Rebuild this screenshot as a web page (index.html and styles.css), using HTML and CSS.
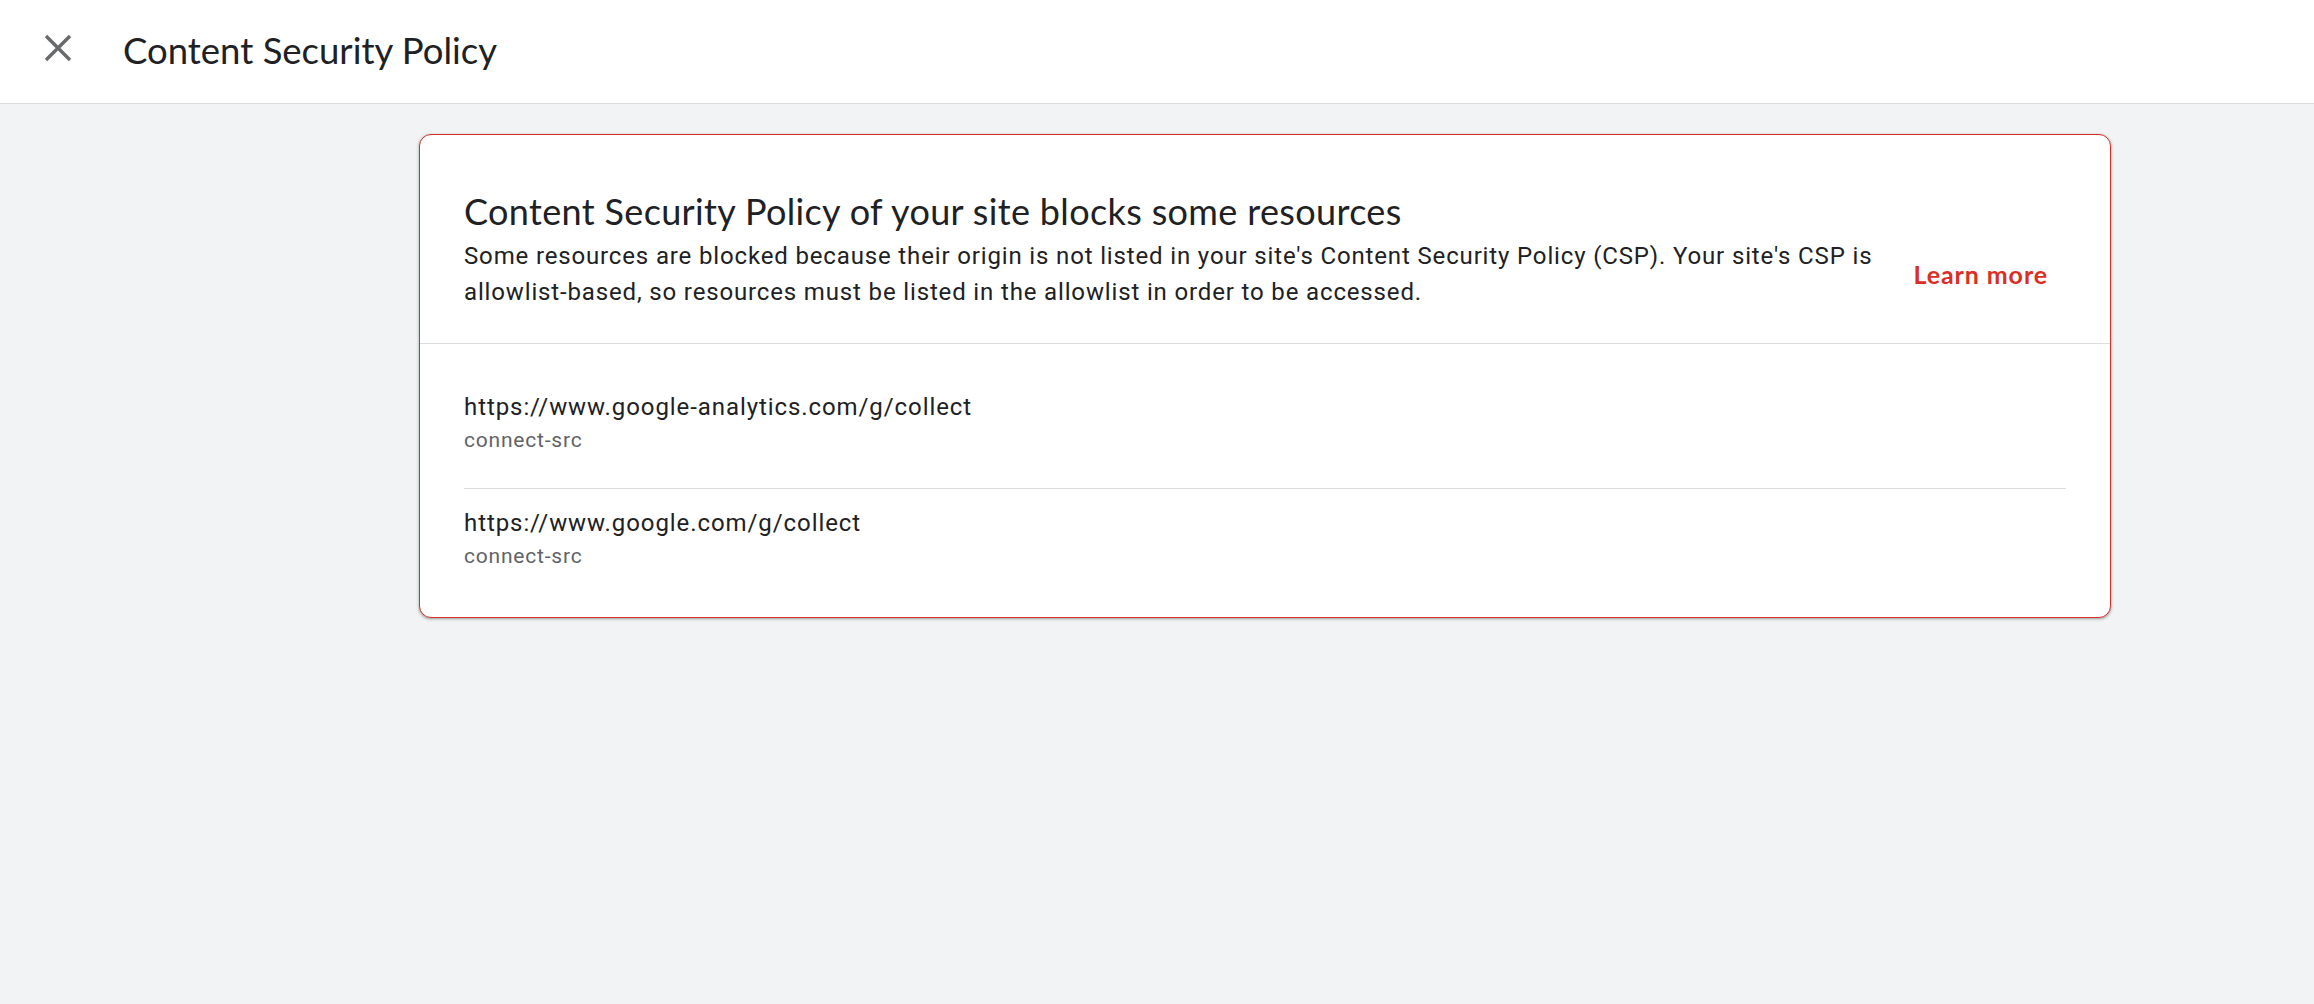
FILE: index.html
```html
<!DOCTYPE html>
<html lang="en">
<head>
  <meta charset="UTF-8">
  <meta name="viewport" content="width=device-width, initial-scale=1.0">
  <title>Content Security Policy</title>
  <link rel="stylesheet" href="styles.css">
</head>
<body>
  <!-- Top bar -->
  <header class="topbar">
    <button class="close-btn" aria-label="Close">
      <svg width="40" height="40" viewBox="0 0 40 40">
        <path d="M8 8 L32 32 M32 8 L8 32" stroke="#68696d" stroke-width="3.4" fill="none"/>
      </svg>
    </button>
    <h1 class="page-title">Content Security Policy</h1>
  </header>

  <main class="content">
    <section class="card">
      <div class="card-head">
        <h2 class="card-title">Content Security Policy of your site blocks some resources</h2>
        <div class="card-row">
          <p class="card-desc">Some resources are blocked because their origin is not listed in your site's Content Security Policy (CSP). Your site's CSP is allowlist-based, so resources must be listed in the allowlist in order to be accessed.</p>
          <a class="learn-more" href="#">Learn more</a>
        </div>
      </div>

      <ul class="resource-list">
        <li class="resource">
          <div class="resource-url">https://www.google-analytics.com/g/collect</div>
          <div class="resource-type">connect-src</div>
        </li>
        <li class="resource">
          <div class="resource-url">https://www.google.com/g/collect</div>
          <div class="resource-type">connect-src</div>
        </li>
      </ul>
    </section>
  </main>
</body>
</html>
```

FILE: styles.css
```css
/* General Styling */
body {
  margin: 0;
  font-family: Roboto, 'Liberation Sans', sans-serif;
  background: #f1f3f4;
  color: #202124;
  height: 100vh;
  overflow: hidden;
}

/* Top bar */
.topbar {
  display: flex;
  align-items: center;
  height: 103px;
  background: #fff;
  border-bottom: 1px solid #dadce0;
}

.close-btn {
  display: flex;
  align-items: center;
  justify-content: center;
  width: 60px;
  height: 60px;
  margin: 0 35px 8px 28px;
  padding: 0;
  background: none;
  border: none;
  cursor: pointer;
}

.page-title {
  margin: 0 0 4px;
  font-family: Lato, Roboto, sans-serif;
  font-size: 36.5px;
  font-weight: 400;
  color: #202124;
}

/* Card */
.content {
  padding: 30px 203px 0 419px;
}

.card {
  background: #fff;
  border: 1px solid #d93025;
  border-radius: 12px;
  box-shadow: 0 1px 2px rgba(60, 64, 67, 0.3), 0 1px 3px 1px rgba(60, 64, 67, 0.15);
}

.card-head {
  padding: 55px 44px 33px 44px;
  border-bottom: 1px solid #dadce0;
}

.card-title {
  margin: 0 0 6px;
  font-family: Lato, Roboto, sans-serif;
  font-size: 36px;
  line-height: 42px;
  font-weight: 400;
  letter-spacing: 0.35px;
}

.card-row {
  display: flex;
  align-items: center;
  gap: 12px;
}

.card-desc {
  flex: 1;
  margin: 0;
  font-size: 24px;
  line-height: 36px;
  letter-spacing: 0.85px;
}

.learn-more {
  padding: 8px 18px;
  font-family: Lato, Roboto, sans-serif;
  font-size: 25px;
  font-weight: 700;
  letter-spacing: 0.9px;
  color: #d93025;
  text-decoration: none;
  white-space: nowrap;
}

/* Resource list */
.resource-list {
  list-style: none;
  margin: 0;
  padding: 29px 44px 13px 44px;
}

.resource {
  padding: 16px 0 33px;
}

.resource + .resource {
  border-top: 1px solid #dadce0;
}

.resource-url {
  font-size: 24px;
  line-height: 36px;
  letter-spacing: 0.92px;
}

.resource-type {
  font-size: 21px;
  line-height: 30px;
  color: #5f6368;
  letter-spacing: 0.8px;
}
```
